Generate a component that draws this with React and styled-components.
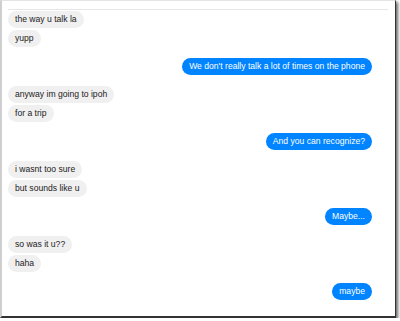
import React from "react";
import styled, { createGlobalStyle } from "styled-components";

const GlobalStyle = createGlobalStyle`
  html, body {
    margin: 0;
    padding: 0;
    background: #fff;
  }
  body {
    font-family: "Liberation Sans", Arial, sans-serif;
  }
`;

// conversation grouped by sender
const groups = [
  { me: false, lines: ["the way u talk la", "yupp"] },
  { me: true, lines: ["We don't really talk a lot of times on the phone"] },
  { me: false, lines: ["anyway im going to ipoh", "for a trip"] },
  { me: true, lines: ["And you can recognize?"] },
  { me: false, lines: ["i wasnt too sure", "but sounds like u"] },
  { me: true, lines: ["Maybe..."] },
  { me: false, lines: ["so was it u??", "haha"] },
  { me: true, lines: ["maybe"] },
];

const App = () => {
  return (
    <>
      <GlobalStyle />
      <Frame>
        <Divider />
        <Thread>
          {groups.map((group, gi) => (
            <Group key={gi} $me={group.me}>
              {group.lines.map((line, li) => (
                <Bubble key={li} $me={group.me}>
                  {line}
                </Bubble>
              ))}
            </Group>
          ))}
        </Thread>
      </Frame>
    </>
  );
};

const Frame = styled.div`
  box-sizing: border-box;
  width: 396px;
  height: 318px;
  background: #fff;
  border-top: 1px solid #e4e4e4;
  border-left: 2px solid #cfcfcf;
  border-right: 1px solid #333;
  border-bottom: 2px solid #333;
  box-shadow: 2px 2px 3px rgba(0, 0, 0, 0.6);
  padding: 8px 7px 0 6px;
  display: flex;
  flex-direction: column;
  overflow: hidden;
`;

const Divider = styled.div`
  height: 1px;
  background: #e6e6e6;
  flex-shrink: 0;
`;

const Thread = styled.div`
  display: flex;
  flex-direction: column;
  gap: 11.3px;
  padding: 1px 16px 0 0;
`;

const Group = styled.div`
  display: flex;
  flex-direction: column;
  align-items: ${(p) => (p.$me ? "flex-end" : "flex-start")};
  gap: 1.5px;
`;

const Bubble = styled.div`
  height: 17px;
  line-height: 17px;
  padding: 0 7px;
  border-radius: 9px;
  font-size: 8.6px;
  white-space: nowrap;
  background: ${(p) => (p.$me ? "#0084ff" : "#f1f0f0")};
  color: ${(p) => (p.$me ? "#fff" : "#222")};
`;

export default App;
